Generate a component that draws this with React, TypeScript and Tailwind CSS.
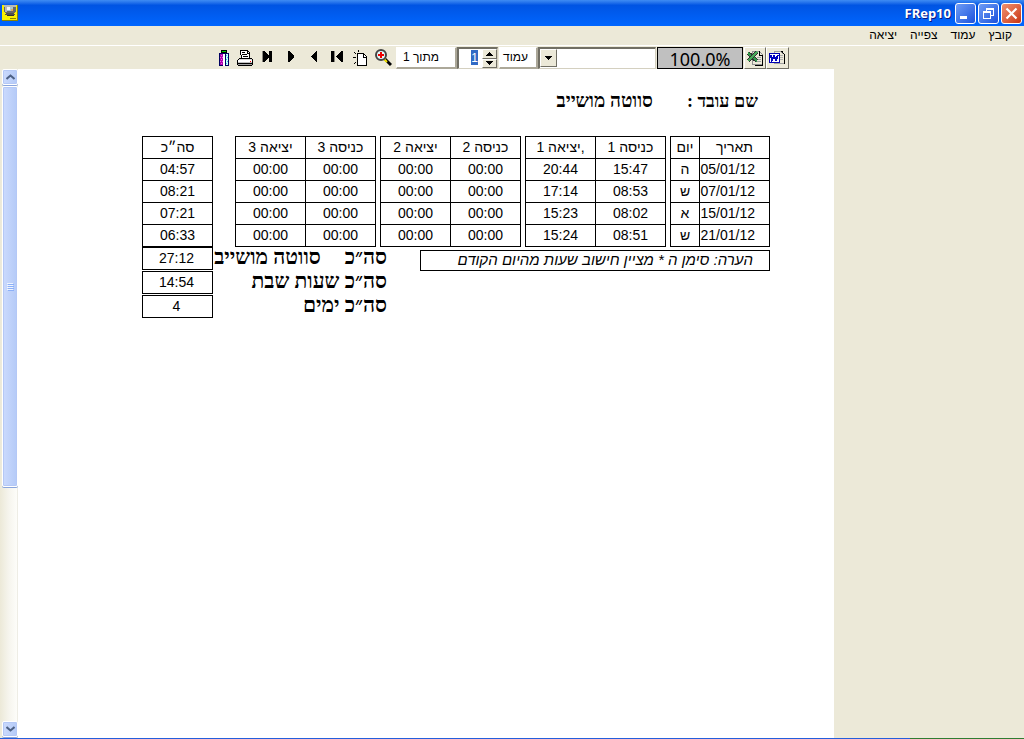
import React from 'react';
import clsx from 'clsx';

const employee = 'סווטה מושייב';

const headers = ['תאריך', 'יום', null, 'כניסה 1', ',יציאה 1', null, 'כניסה 2', 'יציאה 2', null, 'כניסה 3', 'יציאה 3', null, 'סה״כ'];

const rows = [
  ['05/01/12', 'ה', null, '15:47', '20:44', null, '00:00', '00:00', null, '00:00', '00:00', null, '04:57'],
  ['07/01/12', 'ש', null, '08:53', '17:14', null, '00:00', '00:00', null, '00:00', '00:00', null, '08:21'],
  ['15/01/12', 'א', null, '08:02', '15:23', null, '00:00', '00:00', null, '00:00', '00:00', null, '07:21'],
  ['21/01/12', 'ש', null, '08:51', '15:24', null, '00:00', '00:00', null, '00:00', '00:00', null, '06:33'],
];

const totals = [
  { label: 'סה״כ', name: employee, value: '27:12' },
  { label: 'סה״כ שעות שבת', name: '', value: '14:54' },
  { label: 'סה״כ ימים', name: '', value: '4' },
];

function AppIcon() {
  return (
    <svg width="16" height="16" viewBox="0 0 16 16" shapeRendering="crispEdges">
      <path fill="#f8f000" d="M0 0h16v16H0z" />
      <path fill="#8a8400" d="M0 15h16v1H0zM15 0h1v16h-1zM8 13h6v1H8z" />
      <path fill="#686868" d="M2 1h12v6h-1v1H3V7H2z" />
      <path fill="#b8b8b8" d="M2 0h12v2H2zM3 2h2v5H3z" />
      <path fill="#a8c8d0" d="M5 2h6v4H5z" />
      <path fill="#f4f4f4" d="M5 2h3v3H5z" />
      <path fill="#e0a860" d="M9 4h2v2H9z" />
      <path fill="#505050" d="M4 8h8v1H4zM3 9h10v1H3z" />
      <path fill="#303030" d="M5 10h7v1H5z" />
    </svg>
  );
}

function ExitIcon() {
  return (
    <svg width="12" height="18" viewBox="0 0 12 18" shapeRendering="crispEdges">
      <path d="M3 1h6v3H3z" />
      <path fill="#00d000" d="M4 2h4v1H4z" />
      <path fill="#000060" d="M1 4h10v13H1z" />
      <path fill="#b000b0" d="M2 5h3v11H2z" />
      <path fill="#e070e0" d="M3 6h1v1H3zM2 8h1v1H2zM4 8h1v1H4zM3 10h1v1H3zM2 12h1v1H2zM4 12h1v1H4zM3 14h1v1H3z" />
      <path fill="#fff" d="M5 5h2v12H5z" />
      <path fill="#c8ffff" d="M8 5h2v11H8z" />
      <path fill="#30d0e0" d="M8 6h1v1H8zM9 8h1v1H9zM8 10h1v1H8zM9 12h1v1H9zM8 14h1v1H8z" />
    </svg>
  );
}

function PrinterIcon() {
  return (
    <svg width="17" height="18" viewBox="0 0 17 18" shapeRendering="crispEdges">
      <path fill="#fff" stroke="#000" d="M3.5 1.5h7l2 2v6h-8z" />
      <path fill="none" stroke="#000" d="M10.5 1v3h2M5 3.5h3M5 5.5h5M6 7.5h5" />
      <path fill="#000" d="M2 9h13v1h1v6h-1v1H1v-1H0v-5h1v-1h1z" />
      <path fill="#d8d8d8" d="M2 10h13v1H2z" />
      <path fill="#fff" d="M1 11h14v2H1z" />
      <path fill="#c0c0c0" d="M1 13h14v1H1z" />
      <path fill="#f00" d="M13 12h1v1h-1z" />
      <path fill="#a0a0a0" d="M1 15h14v1H1z" />
    </svg>
  );
}

function LastIcon() {
  return (
    <svg width="12" height="18" viewBox="0 0 12 18" shapeRendering="crispEdges">
      <path fill="#8c8a80" d="M1 2h1v11H1z" />
      <path d="M2 2h1l5 5v1l-5 5H2zM8 2h3v11H8z" />
    </svg>
  );
}

function NextIcon() {
  return (
    <svg width="8" height="18" viewBox="0 0 8 18" shapeRendering="crispEdges">
      <path d="M1 2h1l5 5v1l-5 5H1z" />
    </svg>
  );
}

function PrevIcon() {
  return (
    <svg width="8" height="18" viewBox="0 0 8 18" shapeRendering="crispEdges">
      <path d="M7 2H6L1 7v1l5 5h1z" />
    </svg>
  );
}

function FirstIcon() {
  return (
    <svg width="12" height="18" viewBox="0 0 12 18" shapeRendering="crispEdges">
      <path fill="#8c8a80" d="M3 2h1v11H3z" />
      <path d="M0 2h3v11H0zM12 2h-1L5 7v1l6 5h1z" />
    </svg>
  );
}

function NewPageIcon() {
  return (
    <svg width="14" height="18" viewBox="0 0 14 18" shapeRendering="crispEdges">
      <path fill="#fff" stroke="#000" d="M4.5 4.5h6l3 3v9h-9z" />
      <path fill="none" stroke="#000" d="M10.5 4v4h3" />
      <path d="M1 3h1v1H1zM2 4h1v1H2zM5 1h1v2H5zM0 8h3v1H0zM2 13h1v1H2zM1 14h1v1H1z" />
    </svg>
  );
}

function MagnifierIcon() {
  return (
    <svg width="17" height="18" viewBox="0 0 17 18">
      <path stroke="#000" strokeWidth="3" d="m10 10 6 6" />
      <path stroke="#f0e000" strokeWidth="2" d="m9 10 3 3" />
      <circle cx="6" cy="6" r="5" fill="#e4f8f8" stroke="#444" strokeWidth="2" />
      <path fill="#f00000" d="M5 3h2v2h2v2H7v2H5V7H3V5h2z" />
    </svg>
  );
}

function ExcelIcon() {
  return (
    <svg width="17" height="16" viewBox="0 0 17 16" shapeRendering="crispEdges">
      <path fill="#ece9d8" stroke="#909090" d="M5.500 1.500h7l3 3v10h-10z" />
      <path fill="none" stroke="#000" d="M12.500 1v4h3v10h-8" />
      <path stroke="#a0a0a0" d="M10 7.500h4M10 9.500h4M8 11.500h6" />
      <path stroke="#303030" strokeWidth="4" d="m1 3 9 8" />
      <path stroke="#2f9a48" strokeWidth="2" d="m1 3 9 8" />
      <path stroke="#303030" strokeWidth="3" d="m10 2-9 9" />
      <path stroke="#48a858" strokeWidth="2" d="m10 2-9 9" />
    </svg>
  );
}

function WordIcon() {
  return (
    <svg width="17" height="16" viewBox="0 0 17 16" shapeRendering="crispEdges">
      <path fill="#ece9d8" stroke="#a0a0a0" d="M5.500 1.500h6l4 3v9h-10z" />
      <path fill="none" stroke="#000" d="M12 1.500h1l2.500 3v9.500" />
      <path stroke="#b0b0b0" d="M11 5.500h3M11 7.500h3M11 9.500h3" />
      <path fill="#0000b0" d="M0 3h11v10H0z" />
      <path fill="#fff" d="M1 4h9v8H1z" />
      <path fill="none" stroke="#0000c0" strokeWidth="2" d="m2 5 1 5 2-4 2 4 2-5" />
    </svg>
  );
}

const navButtons = [
  { label: 'סגור', icon: <ExitIcon />, box: 'w-3' },
  { label: 'הדפס', icon: <PrinterIcon />, box: 'w-[17px]' },
  { label: 'עמוד אחרון', icon: <LastIcon />, box: 'w-3' },
  { label: 'עמוד הבא', icon: <NextIcon />, box: 'w-5 pl-[7px]' },
  { label: 'עמוד קודם', icon: <PrevIcon />, box: 'w-3 pl-[3px]' },
  { label: 'עמוד ראשון', icon: <FirstIcon />, box: 'w-5 pl-[5px]' },
  { label: 'עמוד חדש', icon: <NewPageIcon />, box: 'w-[15px]' },
  { label: 'הגדלה', icon: <MagnifierIcon />, box: 'w-[17px]' },
];

const sunken = 'border-t-2 border-l-2 border-t-[#716f64] border-l-[#716f64] border-b border-r border-b-[#d4d0c0] border-r-[#d4d0c0]';
const raised = 'border border-t-white border-l-white border-r-[#716f64] border-b-[#716f64] bg-[#ece9d8]';
const panel = 'border border-t-white border-l-white border-r-[#aca899] border-b-[#aca899] border-r-2 border-b-2 bg-white';

function TitleBar() {
  const button = 'flex size-[21px] items-center justify-center rounded-[3px] border border-white';
  return (
    <header
      dir="ltr"
      className="flex h-[26px] items-center bg-linear-to-b from-[#3f8cf3] from-0% via-[#0054e3] via-20% to-[#0066ff] px-[2px]"
    >
      <AppIcon />
      <h1 className="ml-auto mr-1 font-['Open_Sans',sans-serif] text-[13px] font-bold leading-5 text-white [text-shadow:1px_1px_0_#0a1883]">FRep10</h1>
      <div className="flex gap-[2px]">
        <button aria-label="מזער" className={clsx(button, 'bg-linear-to-br from-[#6f9cf5] to-[#1c50dc]')}>
          <svg width="19" height="19" shapeRendering="crispEdges">
            <path fill="#fff" d="M4 12h7v3H4z" />
          </svg>
        </button>
        <button aria-label="שחזר" className={clsx(button, 'bg-linear-to-br from-[#6f9cf5] to-[#1c50dc]')}>
          <svg width="19" height="19" shapeRendering="crispEdges">
            <path fill="#fff" d="M7 4h8v2H7zM14 6h1v6h-1zM12 11h2v1h-2zM7 6h1v1H7zM4 7h8v2H4zM4 9h1v6H4zM11 9h1v6h-1zM5 14h6v1H5z" />
          </svg>
        </button>
        <button aria-label="סגור" className={clsx(button, 'bg-linear-to-br from-[#f0906f] to-[#c8320c]')}>
          <svg width="19" height="19">
            <path stroke="#fff" strokeWidth="2.200" d="m4.500 4.500 10 10m0-10-10 10" />
          </svg>
        </button>
      </div>
    </header>
  );
}

function MenuBar() {
  return (
    <nav className="flex h-5 items-start gap-[13px] border-b border-white px-3 text-[12px] leading-[18px]">
      <button>קובץ</button>
      <button>עמוד</button>
      <button>צפייה</button>
      <button>יציאה</button>
    </nav>
  );
}

function Toolbar() {
  return (
    <div dir="ltr" className="flex h-[23px] items-start pl-[218px] pt-px text-[12px]">
      <div className="mr-1 flex gap-[7px] pt-[2px]">
        {navButtons.map((b) => (
          <button key={b.label} aria-label={b.label} className={clsx('h-[18px] shrink-0', b.box)}>
            {b.icon}
          </button>
        ))}
      </div>
      <div dir="rtl" className={clsx('h-[22px] w-[61px] shrink-0 pr-4 leading-[18px]', panel)}>מתוך 1</div>
      <div className={clsx('flex h-[22px] w-[41px] shrink-0 bg-white', sunken)}>
        <div className="flex flex-1 items-start justify-end pt-px">
          <input
            aria-label="מספר עמוד"
            defaultValue="1"
            className="h-[15px] w-[7px] bg-[#316ac5] p-0 text-center text-[12px] leading-4 text-white outline-none"
          />
        </div>
        <div className="ml-1 flex w-[15px] flex-col">
          <button aria-label="הגדל" className={clsx('flex flex-1 items-center justify-center', raised)}>
            <svg width="7" height="4" shapeRendering="crispEdges"><path d="M3 0h1v1H3zM2 1h3v1H2zM1 2h5v1H1zM0 3h7v1H0z" /></svg>
          </button>
          <button aria-label="הקטן" className={clsx('flex flex-1 items-center justify-center', raised)}>
            <svg width="7" height="4" shapeRendering="crispEdges"><path d="M0 0h7v1H0zM1 1h5v1H1zM2 2h3v1H2zM3 3h1v1H3z" /></svg>
          </button>
        </div>
      </div>
      <div dir="rtl" className={clsx('ml-px h-[22px] w-[39px] shrink-0 pr-2 leading-[18px]', panel)}>עמוד</div>
      <div className={clsx('flex h-[22px] w-[118px] shrink-0 bg-white', sunken)}>
        <span className={clsx('flex h-[18px] w-[17px] shrink-0 items-center justify-center', raised)}>
          <svg width="7" height="4" shapeRendering="crispEdges"><path d="M0 0h7v1H0zM1 1h5v1H1zM2 2h3v1H2zM3 3h1v1H3z" /></svg>
        </span>
        <select aria-label="גודל תצוגה" dir="rtl" className="min-w-0 flex-1 appearance-none bg-white outline-none">
          <option></option>
        </select>
      </div>
      <output className="ml-px h-[22px] w-[86px] shrink-0 border border-black bg-[#c0c0c0] text-center font-['Noto_Sans',sans-serif] text-[18px] leading-[22px]">
        100.0%
      </output>
      <button aria-label="Excel" className={clsx('ml-px flex h-[22px] w-[22px] shrink-0 items-center justify-center', raised)}>
        <ExcelIcon />
      </button>
      <button aria-label="Word" className={clsx('flex h-[22px] w-[23px] shrink-0 items-center justify-center', raised)}>
        <WordIcon />
      </button>
    </div>
  );
}

function ScrollBar() {
  const part = 'flex w-4 items-center justify-center rounded-[2px] border border-white bg-linear-to-r from-[#cbdafd] to-[#b4caf7] shadow-[inset_0_0_0_1px_#b4c8f6,0_1px_0_#8aa5dc]';
  return (
    <div className="flex w-[18px] shrink-0 flex-col items-end bg-linear-to-r from-[#ece9d8] via-[#f6f5ee] to-[#fefefb] shadow-[inset_-1px_0_0_#eeede5]">
      <button aria-label="גלול למעלה" className={clsx(part, 'h-4')}>
        <svg width="9" height="6"><path fill="none" stroke="#4d6185" strokeWidth="2" d="M.5 5 4.500 1.500 8.500 5" /></svg>
      </button>
      <div className={clsx(part, 'mt-px h-[401px]')}>
        <svg width="7" height="8" shapeRendering="crispEdges">
          <path fill="#eef4fe" d="M0 0h6v1H0zM0 2h6v1H0zM0 4h6v1H0zM0 6h6v1H0z" />
          <path fill="#8cb0f8" d="M1 1h6v1H1zM1 3h6v1H1zM1 5h6v1H1zM1 7h6v1H1z" />
        </svg>
      </div>
      <button aria-label="גלול למטה" className={clsx(part, 'mb-px mt-auto h-4')}>
        <svg width="9" height="6"><path fill="none" stroke="#4d6185" strokeWidth="2" d="M.5 1 4.500 4.500 8.500 1" /></svg>
      </button>
    </div>
  );
}

function HoursTable() {
  return (
    <table className="w-[628px] table-fixed border-collapse text-center text-[14px] leading-[21px]">
      <colgroup>
        <col className="w-[70px]" />
        <col className="w-[29px]" />
        <col className="w-[5px]" />
        <col className="w-[70px]" />
        <col className="w-[70px]" />
        <col className="w-[5px]" />
        <col className="w-[70px]" />
        <col className="w-[70px]" />
        <col className="w-[5px]" />
        <col className="w-[70px]" />
        <col className="w-[70px]" />
        <col className="w-[23px]" />
        <col className="w-[70px]" />
      </colgroup>
      <thead>
        <tr className="h-[22px]">
          {headers.map((h, i) =>
            h === null ? (
              <td key={i} className="p-0" />
            ) : (
              <th key={i} className="border border-black p-0 align-top font-normal whitespace-nowrap">
                {h}
              </th>
            )
          )}
        </tr>
      </thead>
      <tbody>
        {rows.map((row) => (
          <tr key={row[0]} className="h-[22px]">
            {row.map((cell, i) =>
              cell === null ? (
                <td key={i} className="p-0" />
              ) : (
                <td key={i} className={clsx('border border-black p-0 align-top whitespace-nowrap', i === 0 && 'pr-[14px] text-right')}>
                  {cell}
                </td>
              )
            )}
          </tr>
        ))}
      </tbody>
    </table>
  );
}

function Report() {
  return (
    <main className="w-[816px] shrink-0 bg-white pr-16 pt-5">
      <div className="flex gap-[34px] pr-3 font-['Liberation_Serif',serif] font-bold leading-6">
        <span className="text-[18px]">שם עובד :</span>
        <span className="text-[19px]">{employee}</span>
      </div>
      <div className="mt-[23px]">
        <HoursTable />
      </div>
      <div className="flex w-[628px] items-start justify-between">
        <p className="mt-[3px] h-[21px] w-[350px] border border-black pr-4 text-[15px] italic leading-[18px] whitespace-nowrap">
          הערה: סימן ה * מציין חישוב שעות מהיום הקודם
        </p>
        <dl className="flex w-[245px] flex-col gap-px">
          {totals.map((t) => (
            <div key={t.label} className="flex h-[23px] justify-between">
              <dt className="flex gap-6 whitespace-nowrap font-['Liberation_Serif',serif] text-[21px] font-bold leading-[21px]">
                <span>{t.label}</span>
                {t.name && <span>{t.name}</span>}
              </dt>
              <dd className="w-[71px] border border-black pr-[2px] text-center text-[14px] leading-[21px]">{t.value}</dd>
            </div>
          ))}
        </dl>
      </div>
    </main>
  );
}

export default function App() {
  return (
    <div dir="rtl" className="flex min-h-screen flex-col bg-[#ece9d8] font-['Liberation_Sans',sans-serif] text-black">
      <TitleBar />
      <MenuBar />
      <Toolbar />
      <div dir="ltr" className="flex flex-1">
        <ScrollBar />
        <div dir="rtl" className="flex">
          <Report />
        </div>
      </div>
      <footer dir="ltr" className="flex h-px">
        <div className="flex-[8] bg-[#245edb]" />
        <div className="flex-1 bg-[#2f7d32]" />
      </footer>
    </div>
  );
}
